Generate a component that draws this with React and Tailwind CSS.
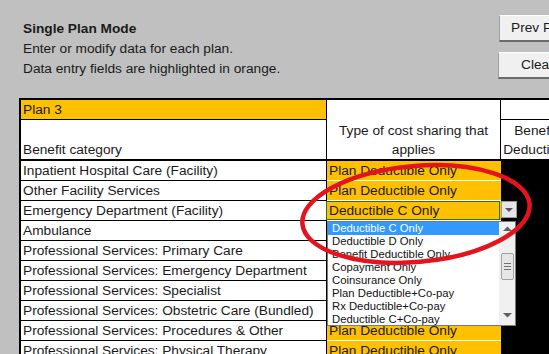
import React from 'react';

const rows = [
  { label: 'Inpatient Hospital Care (Facility)', value: 'Plan Deductible Only' },
  { label: 'Other Facility Services', value: 'Plan Deductible Only' },
  { label: 'Emergency Department (Facility)', value: 'Deductible C Only', selected: true },
  { label: 'Ambulance', value: 'Plan Deductible Only' },
  { label: 'Professional Services: Primary Care', value: 'Plan Deductible Only' },
  { label: 'Professional Services: Emergency Department', value: 'Plan Deductible Only' },
  { label: 'Professional Services: Specialist', value: 'Plan Deductible Only' },
  { label: 'Professional Services: Obstetric Care (Bundled)', value: 'Plan Deductible Only' },
  { label: 'Professional Services: Procedures & Other', value: 'Plan Deductible Only' },
  { label: 'Professional Services: Physical Therapy', value: 'Plan Deductible Only' },
  { label: 'Professional Services: Imaging', value: 'Plan Deductible Only' },
];

const options = [
  'Deductible C Only',
  'Deductible D Only',
  'Benefit Deductible Only',
  'Copayment Only',
  'Coinsurance Only',
  'Plan Deductible+Co-pay',
  'Rx Deductible+Co-pay',
  'Deductible C+Co-pay',
];

const Button = ({ children, className }) => (
  <button
    className={`h-[27px] bg-[#f0f0f0] border border-t-white border-l-[#a0a0a0] border-r-[#a0a0a0] border-b-2 border-b-[#6b6b6b] text-left whitespace-nowrap ${className}`}
  >
    {children}
  </button>
);

const DropdownList = () => (
  <div className="absolute left-[327px] top-[221px] w-[189px] h-[105px] bg-white border border-[#7a7a7a] flex overflow-hidden">
    <div className="flex-1 text-[11.3px] leading-[13px] text-[#111]">
      {options.map((o, i) => (
        <div
          key={o}
          className={`h-[13px] pl-[4px] whitespace-nowrap ${i === 0 ? 'bg-[#3399ff] text-white' : ''}`}
        >
          {o}
        </div>
      ))}
    </div>
    <div className="w-[16px] bg-[#f0f0f0] flex flex-col items-center">
      <svg className="mt-[4px]" width="9" height="5" viewBox="0 0 9 5">
        <path d="M0 5 L4.5 0.5 L9 5 Z" fill="#606060" />
      </svg>
      <div className="mt-[22px] w-[13px] h-[27px] bg-[#e6e6e6] border border-[#a3a3a3] rounded-[2px] flex flex-col items-center justify-center gap-[2px]">
        <div className="w-[7px] h-px bg-[#707070]" />
        <div className="w-[7px] h-px bg-[#707070]" />
        <div className="w-[7px] h-px bg-[#707070]" />
      </div>
      <svg className="mt-auto mb-[7px]" width="9" height="5" viewBox="0 0 9 5">
        <path d="M0 0 L9 0 L4.5 4.5 Z" fill="#606060" />
      </svg>
    </div>
  </div>
);

export default function App() {
  return (
    <div
      className="relative w-[549px] h-[354px] overflow-hidden bg-[#c0c0c0] text-[#1a1a1a] text-[13.7px]"
      style={{ fontFamily: '"Liberation Sans", Arial, sans-serif' }}
    >
      <div className="w-[760px]">
        {/* top panel */}
        <div className="flex h-[98px]">
          <div className="w-[498px] pl-[23px] pt-[19px] leading-[20px]">
            <div className="font-bold">Single Plan Mode</div>
            <div>Enter or modify data for each plan.</div>
            <div>Data entry fields are highlighted in orange.</div>
          </div>
          <div className="flex flex-col gap-[10px] pt-[15px]">
            <Button className="ml-[1px] w-[92px] pl-[11px]">Prev Plan</Button>
            <Button className="w-[110px] pl-[22px]">Clear Plan</Button>
          </div>
        </div>

        {/* table */}
        <div className="ml-[19px] border-l-2 border-t-2 border-black bg-black">
          <div className="flex border-b-2 border-black bg-white">
            <div className="w-[306px] border-r border-black flex flex-col">
              <div className="h-[20px] bg-[#ffc000] border-b border-black pl-[2px] pt-[1px] leading-[18px]">Plan 3</div>
              <div className="h-[39px] flex items-end pl-[2px] leading-[19px]">Benefit category</div>
            </div>
            <div className="w-[174px] h-[59px] border-r border-black flex items-end justify-center text-center leading-[19px]">
              <div>Type of cost sharing that<br />applies</div>
            </div>
            <div className="w-[70px] border-r border-black flex flex-col">
              <div className="h-[20px] border-b border-black" />
              <div className="h-[39px] flex items-end justify-center text-center leading-[19px]">
                <div>Benefit Deductible</div>
              </div>
            </div>
            <div className="flex-1" />
          </div>

          {rows.map((r) => (
            <div key={r.label} className="flex h-[20px]">
              <div className="w-[306px] bg-white border-r border-b border-black pl-[2px] pt-[1px] leading-[18px] whitespace-nowrap">
                {r.label}
              </div>
              <div className="relative w-[174px] bg-[#ffc000] border-b border-white pl-[2px] pt-[1px] leading-[18px] whitespace-nowrap">
                {r.value}
                {r.selected && (
                  <div className="absolute -left-px top-0 right-[1px] bottom-0 border border-[#217346]" />
                )}
              </div>
              <div className="flex-1 bg-black" />
            </div>
          ))}
        </div>
      </div>

      {/* cell dropdown button */}
      <div className="absolute left-[501px] top-[201px] w-[16px] h-[17px] bg-[#e3e5ea] border border-[#9a9a9a] flex items-center justify-center">
        <svg width="8" height="4" viewBox="0 0 8 4">
          <path d="M0 0 L8 0 L4 4 Z" fill="#555" />
        </svg>
      </div>

      <DropdownList />

      {/* red annotation ring */}
      <svg className="absolute inset-0 pointer-events-none" width="549" height="354" viewBox="0 0 549 354">
        <ellipse
          cx="416"
          cy="214"
          rx="114"
          ry="48"
          transform="rotate(-5 416 214)"
          fill="none"
          stroke="#e3141d"
          strokeWidth="4.5"
        />
      </svg>
    </div>
  );
}
